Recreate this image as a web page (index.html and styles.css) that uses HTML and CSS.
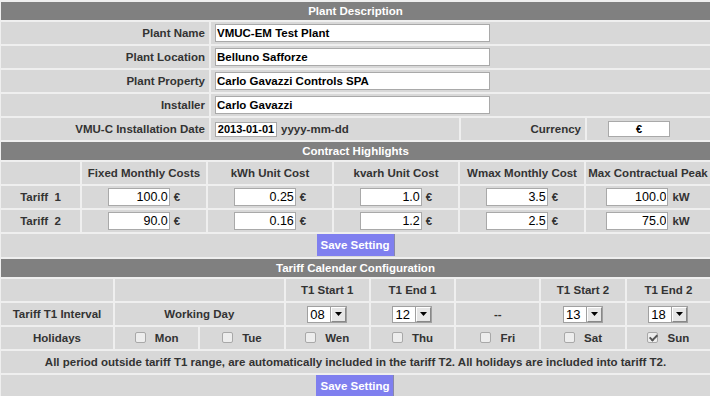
FILE: index.html
```
<!DOCTYPE html>
<html lang="en">
<head>
    <meta charset="UTF-8">
    <meta name="viewport" content="width=device-width, initial-scale=1.0">
    <title>Plant Setup</title>
    <link rel="stylesheet" href="styles.css">
</head>
<body>

    <div class="panel">

        <!-- Plant Description -->
        <div class="section plant">
            <div class="title">Plant Description</div>

            <div class="cell label">Plant Name</div>
            <div class="cell field span"><input class="text" type="text" value="VMUC-EM Test Plant"></div>

            <div class="cell label">Plant Location</div>
            <div class="cell field span"><input class="text" type="text" value="Belluno Safforze"></div>

            <div class="cell label">Plant Property</div>
            <div class="cell field span"><input class="text" type="text" value="Carlo Gavazzi Controls SPA"></div>

            <div class="cell label">Installer</div>
            <div class="cell field span"><input class="text" type="text" value="Carlo Gavazzi"></div>

            <div class="cell label">VMU-C Installation Date</div>
            <div class="cell field">
                <input class="date" type="text" value="2013-01-01">
                <span class="hint">yyyy-mm-dd</span>
            </div>
            <div class="cell label">Currency</div>
            <div class="cell field currency-cell"><input class="currency" type="text" value="€"></div>
        </div>

        <!-- Contract Highlights -->
        <div class="section contract">
            <div class="title">Contract Highlights</div>

            <div class="cell"></div>
            <div class="cell center">Fixed Monthly Costs</div>
            <div class="cell center">kWh Unit Cost</div>
            <div class="cell center">kvarh Unit Cost</div>
            <div class="cell center">Wmax Monthly Cost</div>
            <div class="cell center">Max Contractual Peak</div>

            <div class="cell center">Tariff&nbsp; 1</div>
            <div class="cell center"><input class="num" type="text" value="100.0"><span class="unit">€</span></div>
            <div class="cell center"><input class="num" type="text" value="0.25"><span class="unit">€</span></div>
            <div class="cell center"><input class="num" type="text" value="1.0"><span class="unit">€</span></div>
            <div class="cell center"><input class="num" type="text" value="3.5"><span class="unit">€</span></div>
            <div class="cell center"><input class="num" type="text" value="100.0"><span class="unit">kW</span></div>

            <div class="cell center">Tariff&nbsp; 2</div>
            <div class="cell center"><input class="num" type="text" value="90.0"><span class="unit">€</span></div>
            <div class="cell center"><input class="num" type="text" value="0.16"><span class="unit">€</span></div>
            <div class="cell center"><input class="num" type="text" value="1.2"><span class="unit">€</span></div>
            <div class="cell center"><input class="num" type="text" value="2.5"><span class="unit">€</span></div>
            <div class="cell center"><input class="num" type="text" value="75.0"><span class="unit">kW</span></div>

            <div class="cell button-row"><button class="save">Save Setting</button></div>
        </div>

        <!-- Tariff Calendar Configuration -->
        <div class="section calendar">
            <div class="title">Tariff Calendar Configuration</div>

            <div class="cell"></div>
            <div class="cell span2"></div>
            <div class="cell center">T1 Start 1</div>
            <div class="cell center">T1 End 1</div>
            <div class="cell"></div>
            <div class="cell center">T1 Start 2</div>
            <div class="cell center">T1 End 2</div>

            <div class="cell center">Tariff T1 Interval</div>
            <div class="cell center span2">Working Day</div>
            <div class="cell center">
                <span class="select"><select><option>08</option></select><span class="arrow"><svg width="7" height="4" viewBox="0 0 7 4"><path d="M0 0h7L3.5 4z" fill="#000"/></svg></span></span>
            </div>
            <div class="cell center">
                <span class="select"><select><option>12</option></select><span class="arrow"><svg width="7" height="4" viewBox="0 0 7 4"><path d="M0 0h7L3.5 4z" fill="#000"/></svg></span></span>
            </div>
            <div class="cell center">--</div>
            <div class="cell center">
                <span class="select"><select><option>13</option></select><span class="arrow"><svg width="7" height="4" viewBox="0 0 7 4"><path d="M0 0h7L3.5 4z" fill="#000"/></svg></span></span>
            </div>
            <div class="cell center">
                <span class="select"><select><option>18</option></select><span class="arrow"><svg width="7" height="4" viewBox="0 0 7 4"><path d="M0 0h7L3.5 4z" fill="#000"/></svg></span></span>
            </div>

            <div class="cell center">Holidays</div>
            <label class="cell center day"><input type="checkbox">Mon</label>
            <label class="cell center day"><input type="checkbox">Tue</label>
            <label class="cell center day"><input type="checkbox">Wen</label>
            <label class="cell center day"><input type="checkbox">Thu</label>
            <label class="cell center day"><input type="checkbox">Fri</label>
            <label class="cell center day"><input type="checkbox">Sat</label>
            <label class="cell center day"><input type="checkbox" checked>Sun</label>

            <div class="cell center note">All period outside tariff T1 range, are automatically included in the tariff T2. All holidays are included into tariff T2.</div>

            <div class="cell button-row"><button class="save">Save Setting</button></div>
        </div>

    </div>

</body>
</html>
```

FILE: styles.css
```
* { box-sizing: border-box; }
body { margin: 0; background-color: #efefef; color: #333; font: bold 11.5px "Liberation Sans", Arial, sans-serif; overflow: hidden; }
.panel { display: flex; flex-direction: column; gap: 2px; padding: 2px 0 0 1px; }
.section { display: grid; gap: 2px; grid-template-rows: 18px; grid-auto-rows: minmax(22px, auto); }
.plant { grid-template-columns: 208px 248px 124px 1fr; }
.contract { grid-template-columns: 79px repeat(5, 1fr); }
.calendar { grid-template-columns: 112px repeat(7, 1fr); }

.title { grid-column: 1 / -1; display: flex; align-items: center; justify-content: center; background-color: #808080; color: #fff; }
.cell { display: flex; align-items: center; background-color: #d8d8d8; min-width: 0; white-space: nowrap; }
.label { justify-content: flex-end; padding-right: 4px; }
.field { padding-left: 4px; }
.span { grid-column: 2 / -1; }
.span2 { grid-column: span 2; }
.center { justify-content: center; }
.note { grid-column: 1 / -1; }
.button-row { grid-column: 1 / -1; justify-content: center; align-items: flex-start; min-height: 23px; }
.currency-cell { padding-left: 21px; }

input[type=text] { border: 1px solid #a9a9a9; background-color: #fff; color: #000; margin: 0; font-family: "Liberation Sans", Arial, sans-serif; outline: none; }
.text { width: 275px; height: 18px; padding: 0 1px; font-size: 11.5px; font-weight: bold; }
.date { width: 62px; height: 15px; padding: 0; text-align: center; font-size: 11px; font-weight: bold; }
.hint { margin-left: 4px; }
.currency { width: 62px; height: 16px; padding: 0; text-align: center; font-size: 11px; font-weight: bold; }
.num { width: 62px; height: 18px; padding: 0 1px; text-align: right; font-size: 12.5px; font-weight: normal; }
.unit { margin-left: 4px; }

.select { display: inline-flex; height: 17px; border: 1px solid #a0a0a0; background-color: #fff; }
.select select { appearance: none; -webkit-appearance: none; border: none; background: transparent; width: 23px; padding: 0 0 0 2px; margin: 0; color: #000; font: 13px "Liberation Sans", Arial, sans-serif; outline: none; }
.arrow { width: 15px; display: flex; align-items: center; justify-content: center; background-color: #e6e6e6; border: 1px solid #fff; border-right-color: #888; border-bottom-color: #888; box-shadow: -1px 0 0 #a0a0a0; }

.day input { appearance: none; -webkit-appearance: none; width: 11px; height: 11px; margin: -2px 9px 0 0; border: 1px solid #a8a8a8; border-radius: 2px; background-color: #ededed; }
.day input:checked::after { content: ""; display: block; width: 3px; height: 6px; margin: 0 0 0 3px; border: solid #555; border-width: 0 2px 2px 0; transform: rotate(45deg); }

.save { width: 78px; height: 22px; border: none; border-right: 1px solid #8888a8; background-color: #7f7fef; color: #fff; font: bold 11.5px "Liberation Sans", Arial, sans-serif; padding: 0; cursor: pointer; }
```
